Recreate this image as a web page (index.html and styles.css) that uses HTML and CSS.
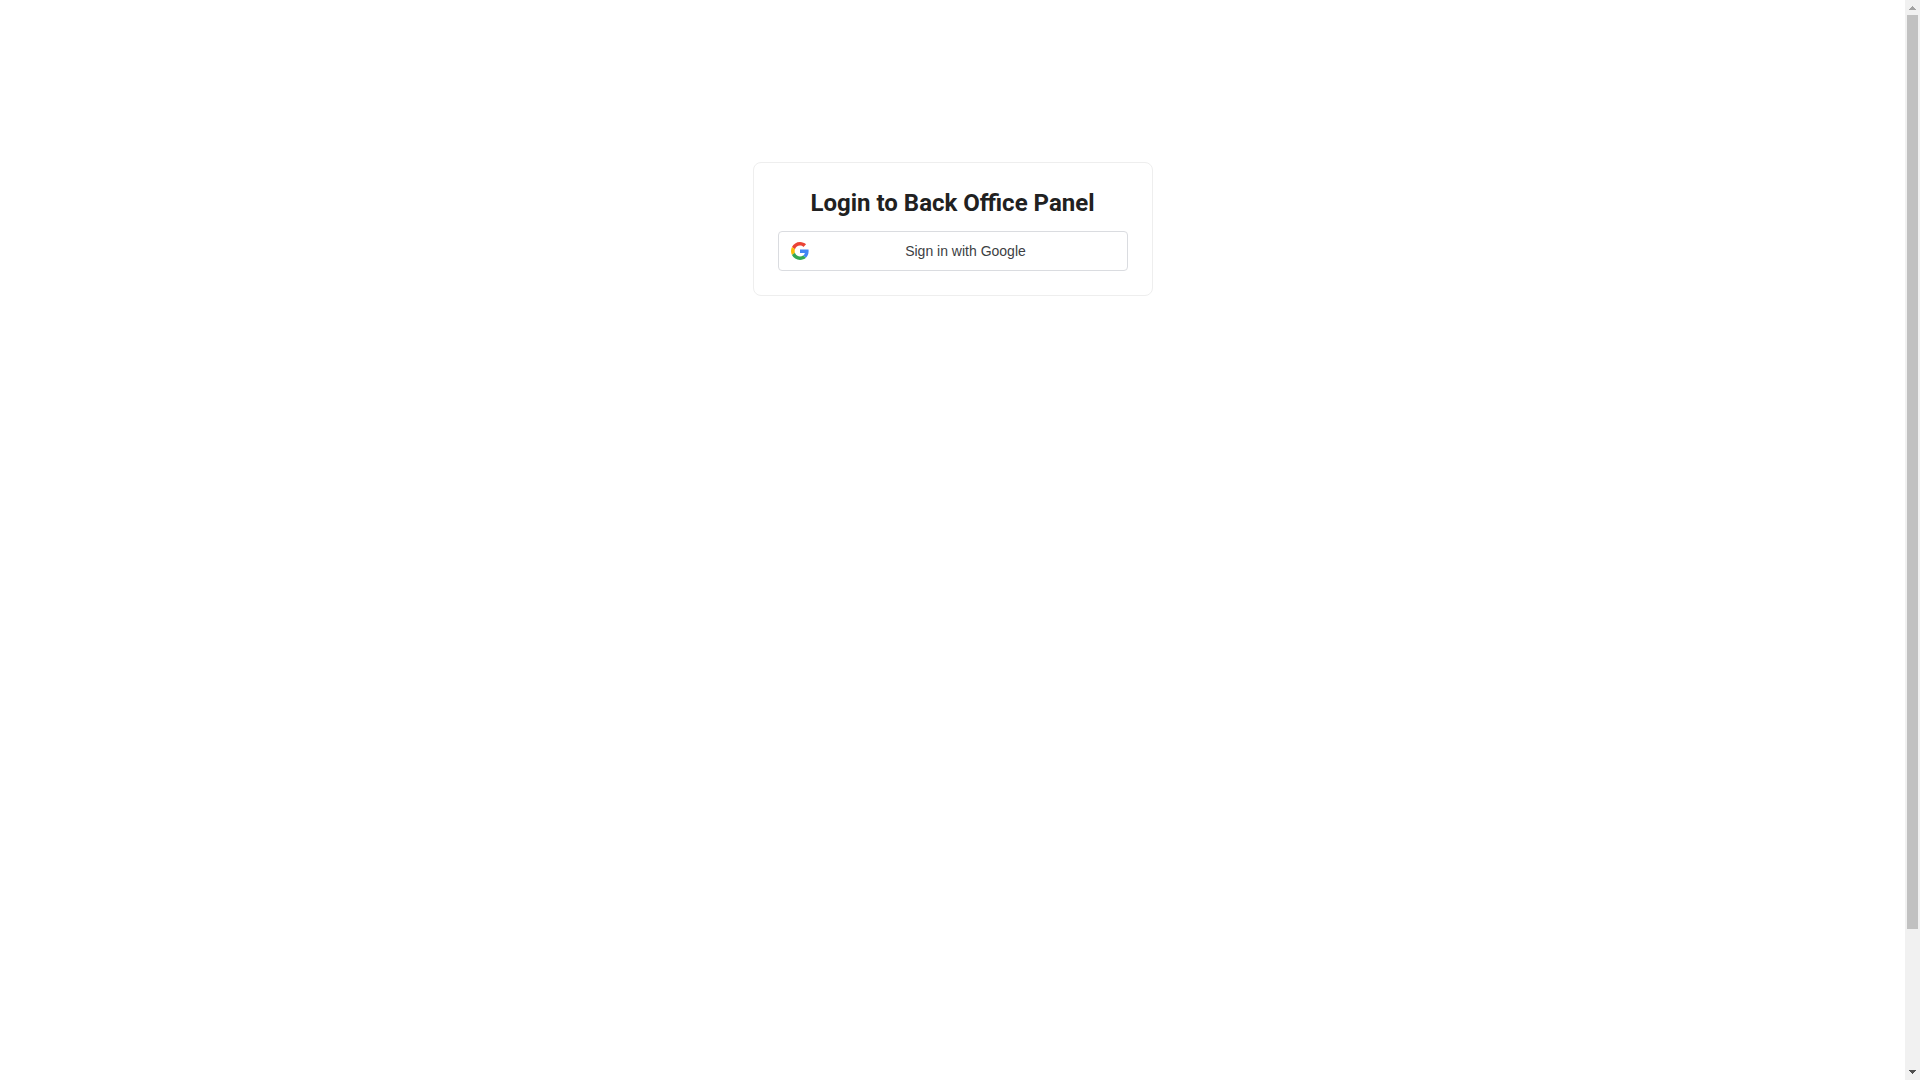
FILE: index.html
```html
<!DOCTYPE html>
<html lang="en">
<head>
<meta charset="utf-8">
<meta name="viewport" content="width=device-width, initial-scale=1">
<title>Login</title>
<link rel="stylesheet" href="styles.css">
</head>
<body class="layout">
<main class="content">
  <section class="card">
    <h1 class="card-title">Login to Back Office Panel</h1>
    <button class="google-button" type="button">
      <svg class="google-icon" viewBox="0 0 48 48" aria-hidden="true">
        <path fill="#EA4335" d="M24 9.5c3.54 0 6.71 1.22 9.21 3.6l6.85-6.85C35.9 2.38 30.47 0 24 0 14.62 0 6.51 5.38 2.56 13.22l7.98 6.19C12.43 13.72 17.74 9.5 24 9.5z"/>
        <path fill="#4285F4" d="M46.98 24.55c0-1.57-.15-3.09-.38-4.55H24v9.02h12.94c-.58 2.96-2.26 5.48-4.78 7.18l7.73 6c4.51-4.18 7.09-10.36 7.09-17.65z"/>
        <path fill="#FBBC05" d="M10.53 28.59c-.48-1.45-.76-2.99-.76-4.59s.27-3.14.76-4.59l-7.98-6.19C.92 16.46 0 20.12 0 24c0 3.88.92 7.54 2.56 10.78l7.97-6.19z"/>
        <path fill="#34A853" d="M24 48c6.48 0 11.93-2.13 15.89-5.81l-7.73-6c-2.15 1.45-4.92 2.3-8.16 2.3-6.26 0-11.57-4.22-13.47-9.91l-7.98 6.19C6.51 42.62 14.62 48 24 48z"/>
      </svg>
      <span class="google-label">Sign in with Google</span>
    </button>
  </section>
</main>
<div class="scrollbar" aria-hidden="true">
  <svg class="scroll-arrow" viewBox="0 0 15 15" shape-rendering="crispEdges"><path fill="#a3a3a3" d="M7 6h1v1h1v1h1v1h1v1H4V9h1V8h1V7h1z"/></svg>
  <div class="scroll-track"><div class="scroll-thumb"></div></div>
  <svg class="scroll-arrow" viewBox="0 0 15 15" shape-rendering="crispEdges"><path fill="#505050" d="M4 5h7v1h-1v1H9v1H8v1H7V8H6V7H5V6H4z"/></svg>
</div>
</body>
</html>
```
FILE: styles.css
```css
* {
  box-sizing: border-box;
}

.layout {
  display: flex;
  min-height: 100vh;
  margin: 0;
  background: #fff;
  font-family: Roboto, sans-serif;
}

.content {
  flex: 1;
  padding: 162px 16px 0;
}

.card {
  max-width: 400px;
  margin: 0 auto;
  padding: 24px;
  border: 1px solid #eee;
  border-radius: 8px;
}

.card-title {
  margin: 0 0 12px;
  color: #212121;
  font-size: 24px;
  font-weight: 700;
  line-height: 32px;
  text-align: center;
}

.google-button {
  display: flex;
  align-items: center;
  gap: 8px;
  width: 100%;
  height: 40px;
  padding: 0 12px;
  border: 1px solid #dadce0;
  border-radius: 4px;
  background: #fff;
  color: #3c4043;
  font-family: "Liberation Sans", Arial, sans-serif;
  font-size: 14px;
  cursor: pointer;
}

.google-icon {
  width: 18px;
  height: 18px;
}

.google-label {
  flex: 1;
  text-align: center;
}

.scrollbar {
  display: flex;
  flex-direction: column;
  width: 15px;
  background: #f1f1f1;
}

.scroll-arrow {
  width: 15px;
  height: 15px;
}

.scroll-track {
  flex: 1;
  padding: 0 2px;
}

.scroll-thumb {
  height: 87%;
  background: #c1c1c1;
}
```
